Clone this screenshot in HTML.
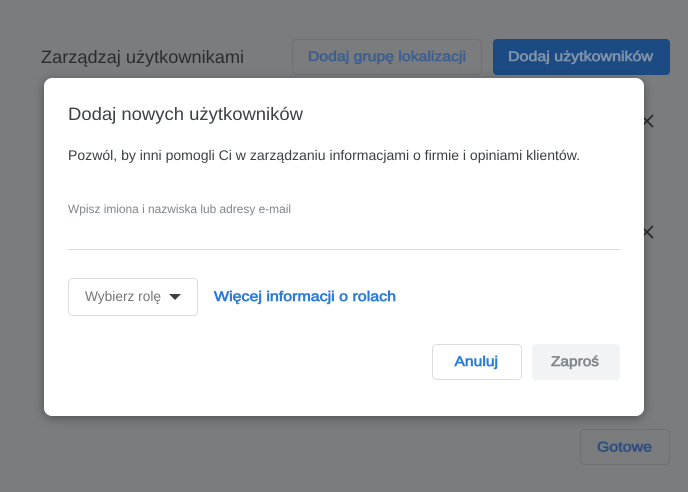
<!DOCTYPE html>
<html lang="pl">
<head>
<meta charset="utf-8">
<title>Dodaj nowych użytkowników</title>
<style>
html,body{margin:0;padding:0;width:688px;height:492px;overflow:hidden;background:#7b7c7e}
#bg{position:absolute;left:0;top:0;width:688px;height:492px;background:#7b7c7e}
#modal{position:absolute;left:44px;top:78px;width:600px;height:338px;border-radius:8px;background:#ffffff;box-shadow:0 2px 10px rgba(0,0,0,.35)}
svg{position:absolute;left:0;top:0;display:block;filter:blur(.25px)}
text{font-family:"Liberation Sans",sans-serif;text-rendering:geometricPrecision}
.m{stroke-width:.6px;paint-order:stroke}
</style>
</head>
<body>
<div id="bg"></div>
<svg width="688" height="492" viewBox="0 0 688 492" xmlns="http://www.w3.org/2000/svg">
<text x="41" y="63" font-size="18" fill="#2b2c2e" textLength="203" lengthAdjust="spacingAndGlyphs">Zarządzaj użytkownikami</text>
<rect x="292.500" y="39.500" width="189" height="35" rx="4" fill="none" stroke="#707173"/>
<text class="m" x="308" y="61" font-size="14" fill="#3e5f8f" stroke="#3e5f8f" textLength="158" lengthAdjust="spacingAndGlyphs">Dodaj grupę lokalizacji</text>
<rect x="493" y="39" width="177" height="36" rx="4" fill="#1c4a82"/>
<text class="m" x="508" y="61" font-size="14" fill="#7f93ab" stroke="#7f93ab" textLength="145" lengthAdjust="spacingAndGlyphs">Dodaj użytkowników</text>
<path d="M641 115L653 127M653 115L641 127M641 226L653 238M653 226L641 238" stroke="#2a2b2d" stroke-width="1.600" fill="none"/>
<rect x="580.500" y="429.500" width="89" height="35" rx="4" fill="none" stroke="#6f7072"/>
<text class="m" x="597" y="451.500" font-size="14" fill="#2d4f7f" stroke="#2d4f7f" textLength="55" lengthAdjust="spacingAndGlyphs">Gotowe</text>
</svg>
<div id="modal"></div>
<svg width="688" height="492" viewBox="0 0 688 492" xmlns="http://www.w3.org/2000/svg">
<text x="68" y="120" font-size="18" fill="#3c4043" textLength="235" lengthAdjust="spacingAndGlyphs">Dodaj nowych użytkowników</text>
<text x="68" y="160" font-size="14" fill="#3c4043" textLength="512" lengthAdjust="spacingAndGlyphs">Pozwól, by inni pomogli Ci w zarządzaniu informacjami o firmie i opiniami klientów.</text>
<text x="68" y="213" font-size="12" fill="#80868b" textLength="223" lengthAdjust="spacingAndGlyphs">Wpisz imiona i nazwiska lub adresy e-mail</text>
<rect x="68" y="249" width="552" height="1" fill="#dadce0"/>
<rect x="68.500" y="278.500" width="129" height="37" rx="4" fill="#fff" stroke="#dadce0"/>
<text x="85" y="301" font-size="14" fill="#757575" textLength="76" lengthAdjust="spacingAndGlyphs">Wybierz rolę</text>
<path d="M169 294H181L175 300Z" fill="#3c4043"/>
<text class="m" x="214" y="301" font-size="14" fill="#2b7bdc" stroke="#2b7bdc" textLength="182" lengthAdjust="spacingAndGlyphs">Więcej informacji o rolach</text>
<rect x="432.500" y="344.500" width="89" height="35" rx="4" fill="#fff" stroke="#dadce0"/>
<text class="m" x="454.500" y="366" font-size="14" fill="#2b7bdc" stroke="#2b7bdc" textLength="43.500" lengthAdjust="spacingAndGlyphs">Anuluj</text>
<rect x="532" y="344" width="88" height="36" rx="4" fill="#f1f3f4"/>
<text class="m" x="551" y="366" font-size="14" fill="#80868b" stroke="#80868b" textLength="48" lengthAdjust="spacingAndGlyphs">Zaproś</text>
</svg>
</body>
</html>
